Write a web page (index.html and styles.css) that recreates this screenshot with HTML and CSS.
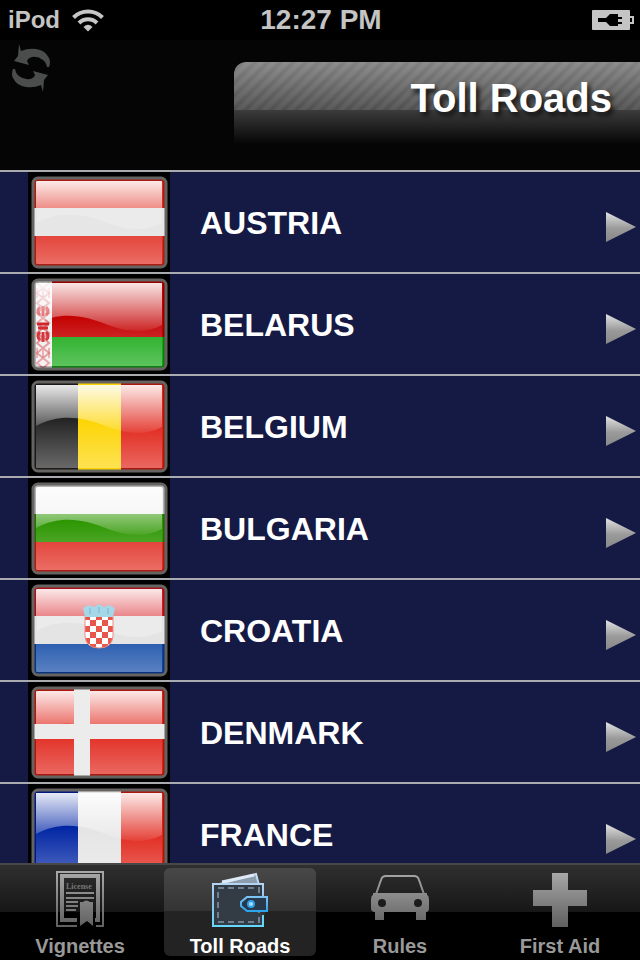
FILE: index.html
```html
<!DOCTYPE html>
<html lang="en">
<head>
  <meta charset="UTF-8">
  <meta name="viewport" content="width=device-width, initial-scale=1.0">
  <title>Toll Roads</title>
  <link rel="stylesheet" href="styles.css">
</head>
<body>
  <!-- Shared shapes -->
  <svg class="defs" width="0" height="0" aria-hidden="true">
    <defs>
      <linearGradient id="gloss-fill" x1="0" y1="0" x2="0" y2="1">
        <stop offset="0" stop-color="#fff" stop-opacity=".9"/>
        <stop offset="1" stop-color="#fff" stop-opacity=".15"/>
      </linearGradient>
      <linearGradient id="glow-fill" x1="0" y1="0" x2="0" y2="1">
        <stop offset="0" stop-color="#fff" stop-opacity="0"/>
        <stop offset="1" stop-color="#fff" stop-opacity=".32"/>
      </linearGradient>
      <linearGradient id="arrow-fill" x1="0" y1="0" x2="0" y2="1">
        <stop offset="0" stop-color="#e2e2e2"/>
        <stop offset=".55" stop-color="#9a9a9a"/>
        <stop offset="1" stop-color="#888"/>
      </linearGradient>
      <linearGradient id="icon-fill" gradientUnits="userSpaceOnUse" x1="0" y1="0" x2="0" y2="60">
        <stop offset="0" stop-color="#aaa"/>
        <stop offset="1" stop-color="#5c5c5c"/>
      </linearGradient>
      <linearGradient id="wallet-line" gradientUnits="userSpaceOnUse" x1="0" y1="0" x2="0" y2="60">
        <stop offset="0" stop-color="#d4e6fa"/>
        <stop offset=".5" stop-color="#8fc0ea"/>
        <stop offset="1" stop-color="#5fdcff"/>
      </linearGradient>
      <linearGradient id="wallet-clasp" x1="0" y1="0" x2="0" y2="1">
        <stop offset="0" stop-color="#7cc4f4"/>
        <stop offset="1" stop-color="#2aa5ee"/>
      </linearGradient>
      <pattern id="checks" x="86" y="40" width="12" height="12" patternUnits="userSpaceOnUse">
        <rect width="12" height="12" fill="#fff"/>
        <path d="M0 0h6v6H0zM6 6h6v6H6z" fill="#e8554a"/>
      </pattern>
      <clipPath id="flag-shape"><rect x="5" y="6" width="133" height="89" rx="4"/></clipPath>
      <symbol id="gloss" viewBox="0 0 142 100">
        <path d="M8 9H134V51C118 60 98 58 80 51C56 41 32 37 8 50Z" fill="url(#gloss-fill)"/>
        <path d="M8 50C32 37 56 41 80 51C98 58 118 60 134 51V92H8Z" fill="url(#glow-fill)"/>
      </symbol>
      <symbol id="frame" viewBox="0 0 142 100">
        <rect x="7" y="8" width="129" height="85" rx="3" fill="none" stroke="#000" stroke-opacity=".25" stroke-width="2"/>
      </symbol>
      <symbol id="arrow" viewBox="0 0 32 32">
        <path d="M1 1L31 16L1 31Z" fill="url(#arrow-fill)"/>
      </symbol>
    </defs>
  </svg>

  <div class="app">
    <!-- Status bar -->
    <div class="status">
      <div class="carrier">
        <span>iPod</span>
        <svg width="32" height="24" viewBox="0 0 32 24">
          <g fill="none" stroke="#c6c6c6" stroke-width="4">
            <path d="M1.500 9.500A20.500 20.500 0 0 1 30.500 9.500"/>
            <path d="M7 15A12.700 12.700 0 0 1 25 15"/>
          </g>
          <path d="M11.500 19Q16 14.500 20.500 19L16 23.500Z" fill="#c6c6c6"/>
        </svg>
      </div>
      <div class="clock">12:27 PM</div>
      <div class="battery">
        <svg width="42" height="20" viewBox="0 0 42 20">
          <rect width="38" height="20" rx="1" fill="#c4c4c4"/>
          <path d="M38 7h3v6h-3" fill="none" stroke="#c4c4c4" stroke-width="2"/>
          <path d="M6 8h8l4-4h8v3h4v2h-4v3h4v2h-4v2h-8l-4-4H6z" fill="#000"/>
        </svg>
      </div>
    </div>

    <!-- Page header -->
    <header class="header">
      <button class="refresh" type="button" aria-label="Refresh">
        <svg width="40" height="48" viewBox="0 0 40 48">
          <g fill="#4b4d4d">
            <path d="M7 0L9 7Q16 4 24 5Q33 6 37 14Q39 18 37 23H35Q34 18 31 16Q26 12 20 13Q16 14 15 17L17 21L2 17L6 12Z"/>
            <path d="M7 0L9 7Q16 4 24 5Q33 6 37 14Q39 18 37 23H35Q34 18 31 16Q26 12 20 13Q16 14 15 17L17 21L2 17L6 12Z" transform="rotate(180 19 24)"/>
          </g>
        </svg>
      </button>
      <h1 class="title">Toll Roads</h1>
    </header>

    <!-- Country list -->
    <main class="countries">
      <a class="country" href="#austria">
        <svg class="flag" viewBox="0 0 142 100">
          <g clip-path="url(#flag-shape)">
            <path d="M0 0h142v100H0z" fill="#e0281c"/>
            <use href="#gloss"/><use href="#frame"/>
            <path d="M6 36h131v28H6z" fill="#e6e6e6"/>
            <path d="M9 51C30 38 56 42 80 51C98 58 118 60 134 51V36H9z" fill="#ebebeb"/>
          </g>
          <rect x="5" y="6" width="133" height="89" rx="5" class="edge"/>
        </svg>
        <span class="name">AUSTRIA</span>
        <svg class="arrow"><use href="#arrow"/></svg>
      </a>
      <a class="country" href="#belarus">
        <svg class="flag" viewBox="0 0 142 100">
          <g clip-path="url(#flag-shape)">
            <path d="M0 0h142v63H0z" fill="#c40000"/>
            <path d="M0 63h142v37H0z" fill="#12a812"/>
            <path d="M0 0h24v100H0z" fill="#eee"/>
            <g fill="none" stroke="#cf1a20" stroke-width="2">
              <path d="M9 9l12 10L9 29l12 10L9 49l12 10L9 69l12 10L9 89l6 5M21 9L9 19l12 10L9 39l12 10L9 59l12 10L9 79l12 10l-6 5" stroke-opacity=".5"/>
              <path d="M12 33q-4 4 0 8M18 33q4 4 0 8M9 50h12M10 54h10M12 58q-4 4 0 8M18 58q4 4 0 8M15 32v10M15 58v10" stroke-width="3"/>
              <path d="M9 14v10M21 14v10M9 74v10M21 74v10M15 15v8M15 76v8" stroke-opacity=".4"/>
            </g>
            <use href="#gloss"/><use href="#frame"/>
          </g>
          <rect x="5" y="6" width="133" height="89" rx="5" class="edge"/>
        </svg>
        <span class="name">BELARUS</span>
        <svg class="arrow"><use href="#arrow"/></svg>
      </a>
      <a class="country" href="#belgium">
        <svg class="flag" viewBox="0 0 142 100">
          <g clip-path="url(#flag-shape)">
            <path d="M0 0h50v100H0z" fill="#222"/>
            <path d="M93 0h49v100H93z" fill="#e02015"/>
            <use href="#frame"/>
            <path d="M50 0h43v100H50z" fill="#fdd400"/>
            <use href="#gloss"/>
          </g>
          <rect x="5" y="6" width="133" height="89" rx="5" class="edge"/>
        </svg>
        <span class="name">BELGIUM</span>
        <svg class="arrow"><use href="#arrow"/></svg>
      </a>
      <a class="country" href="#bulgaria">
        <svg class="flag" viewBox="0 0 142 100">
          <g clip-path="url(#flag-shape)">
            <path d="M0 0h142v36H0z" fill="#eee"/>
            <path d="M0 36h142v28H0z" fill="#2c9600"/>
            <path d="M0 64h142v36H0z" fill="#e0281c"/>
            <use href="#gloss"/><use href="#frame"/>
          </g>
          <rect x="5" y="6" width="133" height="89" rx="5" class="edge"/>
        </svg>
        <span class="name">BULGARIA</span>
        <svg class="arrow"><use href="#arrow"/></svg>
      </a>
      <a class="country" href="#croatia">
        <svg class="flag" viewBox="0 0 142 100">
          <g clip-path="url(#flag-shape)">
            <path d="M0 0h142v50H0z" fill="#d81820"/>
            <path d="M0 50h142v50H0z" fill="#0c46a4"/>
            <use href="#gloss"/><use href="#frame"/>
            <path d="M6 36h131v28H6z" fill="#e4e4e4"/>
            <path d="M9 51C30 38 56 42 80 51C98 58 118 60 134 51V36H9z" fill="#ebebeb"/>
          </g>
          <path d="M57 36h28v20q-1 12-14 12T57 56z" fill="url(#checks)" stroke="#ef8c84"/>
          <path d="M57 37L55 28l6-3 5 2 5-3 5 3 5-2 6 3-2 9z" fill="#a5d8e6"/>
          <path d="M62 28v6M71 27v6M80 28v6" stroke="#8ec4de" stroke-width="2"/>
          <rect x="5" y="6" width="133" height="89" rx="5" class="edge"/>
        </svg>
        <span class="name">CROATIA</span>
        <svg class="arrow"><use href="#arrow"/></svg>
      </a>
      <a class="country" href="#denmark">
        <svg class="flag" viewBox="0 0 142 100">
          <g clip-path="url(#flag-shape)">
            <path d="M0 0h142v100H0z" fill="#e02015"/>
            <use href="#gloss"/><use href="#frame"/>
            <path d="M46 6h16v36h75v15H62v38H46V57H6V42h40z" fill="#ececec"/>
          </g>
          <rect x="5" y="6" width="133" height="89" rx="5" class="edge"/>
        </svg>
        <span class="name">DENMARK</span>
        <svg class="arrow"><use href="#arrow"/></svg>
      </a>
      <a class="country" href="#france">
        <svg class="flag" viewBox="0 0 142 100">
          <g clip-path="url(#flag-shape)">
            <path d="M0 0h50v100H0z" fill="#0024a4"/>
            <path d="M93 0h49v100H93z" fill="#e02015"/>
            <use href="#frame"/>
            <path d="M50 0h43v100H50z" fill="#e4e4e4"/>
            <use href="#gloss"/>
          </g>
          <rect x="5" y="6" width="133" height="89" rx="5" class="edge"/>
        </svg>
        <span class="name">FRANCE</span>
        <svg class="arrow"><use href="#arrow"/></svg>
      </a>
    </main>

    <!-- Tab bar -->
    <nav class="tabs">
      <a class="tab" href="#vignettes">
        <svg width="60" height="60" viewBox="0 0 60 60">
          <g fill="none" stroke="url(#icon-fill)">
            <path d="M27 56H7V2h46v54h-7" stroke-width="2"/>
            <path d="M27 50H12V6h36v44h-3" stroke-width="4"/>
            <path d="M16 23h28M16 28h28M16 32h12M16 36h12M16 40h10" stroke-width="2"/>
          </g>
          <path d="M30 32h3q3-3 7 0h3v24l-6-5-7 5z" fill="url(#icon-fill)"/>
          <text class="license" x="16" y="19">License</text>
        </svg>
        <span>Vignettes</span>
      </a>
      <a class="tab active" href="#toll-roads" aria-current="page">
        <svg width="60" height="60" viewBox="0 0 60 60">
          <path d="M10 14L46 4l3 11z" fill="#8c9dae" stroke="url(#wallet-line)" stroke-width="2"/>
          <path d="M12 12L44 5" stroke="#dfeaf6" stroke-width="3"/>
          <path d="M3 14h50v42H3z" fill="#333b45" stroke="url(#wallet-line)" stroke-width="2"/>
          <path d="M8 18h41v34H8z" fill="none" stroke="#6d8192" stroke-width="2" stroke-dasharray="6 4"/>
          <path d="M57 27H37l-6 5v4l6 5h20z" fill="#27394a" stroke="url(#wallet-clasp)" stroke-width="2"/>
          <path d="M53 42v3" stroke="#333" stroke-width="4"/>
          <circle cx="41" cy="34" r="3" fill="#a8ddff" stroke="#2ca1ee" stroke-width="2"/>
        </svg>
        <span>Toll Roads</span>
      </a>
      <a class="tab" href="#rules">
        <svg width="60" height="60" viewBox="0 0 60 60">
          <path d="M5 27L11 10q1-4 5-4h28q4 0 5 4l6 17" fill="none" stroke="url(#icon-fill)" stroke-width="2"/>
          <path fill-rule="evenodd" d="M3 23h54v2q2 0 2 6v7q0 4-3 4v8H46v-8H14v8H5v-8q-4 0-4-4v-7q0-6 2-6zM12 29a4 4 0 1 0 0 8a4 4 0 1 0 0-8zM48 29a4 4 0 1 0 0 8a4 4 0 1 0 0-8z" fill="url(#icon-fill)"/>
        </svg>
        <span>Rules</span>
      </a>
      <a class="tab" href="#first-aid">
        <svg width="60" height="60" viewBox="0 0 60 60">
          <path d="M22 3h16v17h19v16H38v21H22V36H3V20h19z" fill="url(#icon-fill)"/>
        </svg>
        <span>First Aid</span>
      </a>
    </nav>
  </div>
</body>
</html>
```
FILE: styles.css
```css
/* General styles */
* {
  box-sizing: border-box;
}

body {
  margin: 0;
  font-family: "Liberation Sans", Arial, sans-serif;
  font-weight: bold;
  background-color: #000;
  color: #fff;
}

a {
  color: inherit;
  text-decoration: none;
}

svg {
  display: block;
  flex: none;
}

.defs {
  position: absolute;
}

.app {
  display: flex;
  flex-direction: column;
  height: 100vh;
}

/* Status bar */
.status {
  display: grid;
  grid-template-columns: 1fr auto 1fr;
  align-items: center;
  height: 40px;
  padding: 0 6px 0 8px;
  color: #c4c4c4;
}

.carrier {
  display: flex;
  align-items: center;
  gap: 12px;
  font-size: 24px;
}

.clock {
  font-size: 28px;
}

.battery {
  justify-self: end;
}

/* Page header */
.header {
  display: flex;
  align-items: flex-start;
  height: 130px;
  background: #050505;
}

.refresh {
  margin: 4px 0 0 12px;
  padding: 0;
  border: none;
  background: none;
  cursor: pointer;
}

.title {
  flex: 1;
  margin: 22px 0 0 182px;
  padding-right: 28px;
  height: 82px;
  border-top-left-radius: 12px;
  background:
    linear-gradient(rgba(255, 255, 255, 0.2), rgba(0, 0, 0, 0.2)) top / 100% 48px no-repeat,
    repeating-linear-gradient(135deg, #707070 0 3px, #636363 5px 7px, #707070 9px) top / 100% 48px no-repeat,
    linear-gradient(#3c3c3c, #050505) bottom / 100% 34px no-repeat;
  font-size: 40px;
  line-height: 72px;
  text-align: right;
  text-shadow: 3px 4px 5px #111;
}

/* Country list */
.countries {
  flex: 1;
  min-height: 0;
  overflow-y: auto;
  scrollbar-width: none;
  background: #151a45;
}

.country {
  display: flex;
  align-items: center;
  height: 102px;
  padding: 0 3px 0 28px;
  border-top: 2px solid #a9abae;
}

.flag {
  width: 142px;
  height: 100px;
  background: #000;
}

.edge {
  fill: none;
  stroke: #666462;
  stroke-width: 3px;
}

.name {
  flex: 1;
  padding: 2px 0 0 30px;
  font-size: 32px;
}

.arrow {
  width: 32px;
  height: 32px;
  margin-top: 10px;
}

/* Tab bar */
.tabs {
  display: flex;
  gap: 8px;
  height: 97px;
  padding: 3px 4px;
  border-top: 2px solid #484848;
  background: linear-gradient(#2f2f2f, #171717 47px, #000 47px);
  color: #999;
}

.tab {
  flex: 1;
  display: flex;
  flex-direction: column;
  align-items: center;
  height: 88px;
  padding-top: 2px;
  border-radius: 6px;
  font-size: 20px;
  line-height: 32px;
}

.tab.active {
  background: linear-gradient(#484848, #333 43px, #232323 43px);
  color: #fff;
}

.license {
  fill: #777;
  font-family: "Liberation Serif", serif;
  font-size: 8px;
}
```
